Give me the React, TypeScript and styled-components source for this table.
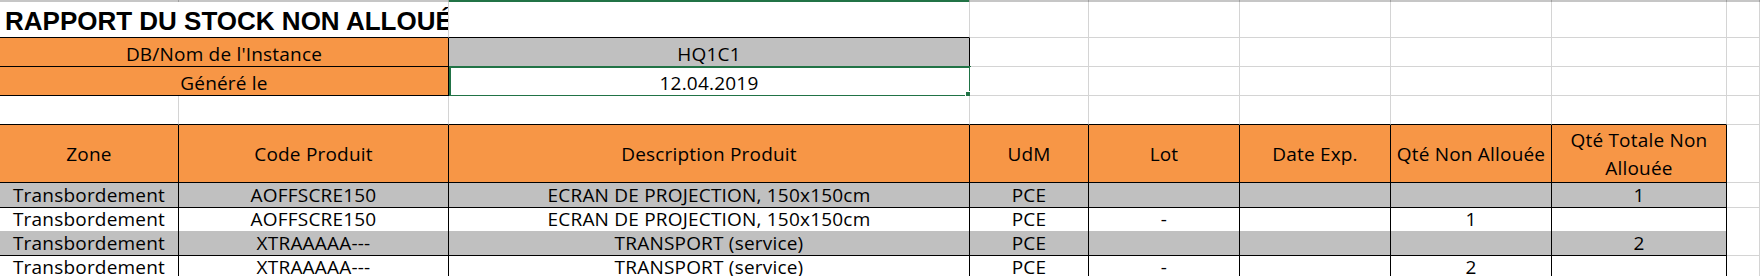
import styled, { createGlobalStyle } from 'styled-components';

const ORANGE = '#f79646';
const GREY = '#c0c0c0';
const GRID = '#d4d4d4';
const INK = '#000000';
const EXCEL_GREEN = '#217346';

const COLUMNS = '179px 270px 521px 119px 151px 151px 161px 175px 1fr';

type Fill = 'orange' | 'grey' | 'white';
type Edge = 'grid' | 'black' | 'none';

const fills: Record<Fill, string> = { orange: ORANGE, grey: GREY, white: '#ffffff' };
const edges: Record<Edge, string> = { grid: GRID, black: INK, none: 'transparent' };

const headers = [
  'Zone',
  'Code Produit',
  'Description Produit',
  'UdM',
  'Lot',
  'Date Exp.',
  'Qté Non Allouée',
  'Qté Totale Non Allouée',
];

const rows = [
  { fill: 'grey' as Fill, height: 25, cells: ['Transbordement', 'AOFFSCRE150', 'ECRAN DE PROJECTION, 150x150cm', 'PCE', '', '', '', '1'] },
  { fill: 'white' as Fill, height: 23, cells: ['Transbordement', 'AOFFSCRE150', 'ECRAN DE PROJECTION, 150x150cm', 'PCE', '-', '', '1', ''] },
  { fill: 'grey' as Fill, height: 25, cells: ['Transbordement', 'XTRAAAAA---', 'TRANSPORT (service)', 'PCE', '', '', '', '2'] },
  { fill: 'white' as Fill, height: 24, cells: ['Transbordement', 'XTRAAAAA---', 'TRANSPORT (service)', 'PCE', '-', '', '2', ''] },
];

const GlobalStyle = createGlobalStyle`
  html, body {
    margin: 0;
    padding: 0;
    background: #ffffff;
    overflow: hidden;
  }
  body {
    font-family: "Open Sans", Lato, sans-serif;
    color: ${INK};
  }
`;

function App() {
  return (
    <Sheet>
      <GlobalStyle />
      <ColumnStrip>
        {Array.from({ length: 9 }).map((_, i) => (
          <StripSegment key={i} $active={i === 2} />
        ))}
      </ColumnStrip>

      <Row $height={36}>
        <TitleCell $span={2} $right="grid" $bottom="black">
          RAPPORT DU STOCK NON ALLOUÉ
        </TitleCell>
        <Cell $right="grid" $bottom="black" />
        {Array.from({ length: 6 }).map((_, i) => (
          <Cell key={i} $right="grid" $bottom="grid" />
        ))}
      </Row>

      <Row $height={29}>
        <Cell $span={2} $fill="orange" $right="black" $bottom="black" $align="bottom">
          DB/Nom de l'Instance
        </Cell>
        <Cell $fill="grey" $right="black" $bottom="black" $align="bottom">
          HQ1C1
        </Cell>
        {Array.from({ length: 6 }).map((_, i) => (
          <Cell key={i} $right="grid" $bottom="grid" />
        ))}
      </Row>

      <Row $height={29}>
        <Cell $span={2} $fill="orange" $right="black" $bottom="black" $align="bottom">
          Généré le
        </Cell>
        <Cell $right="black" $bottom="black" $align="bottom">
          12.04.2019
          <Selection>
            <FillHandle />
          </Selection>
        </Cell>
        {Array.from({ length: 6 }).map((_, i) => (
          <Cell key={i} $right="grid" $bottom="grid" />
        ))}
      </Row>

      <Row $height={29}>
        {Array.from({ length: 8 }).map((_, i) => (
          <Cell key={i} $right="grid" $bottom="black" />
        ))}
        <Cell $right="grid" $bottom="grid" />
      </Row>

      <Row $height={58}>
        {headers.map((label, i) => (
          <HeaderCell key={label} $fill="orange" $right="black" $bottom="black" $wrap={i === 7}>
            {label}
          </HeaderCell>
        ))}
        <Cell $right="grid" $bottom="grid" />
      </Row>

      {rows.map((row, r) => (
        <Row key={r} $height={row.height}>
          {row.cells.map((text, i) => (
            <Cell key={i} $fill={row.fill} $right="black" $bottom="black" $align="bottom">
              {text}
            </Cell>
          ))}
          <Cell $right="grid" $bottom="grid" />
        </Row>
      ))}
    </Sheet>
  );
}

var Sheet = styled.div`
  display: flex;
  flex-direction: column;
  width: 1760px;
  height: 276px;
  overflow: hidden;
`;

var ColumnStrip = styled.div`
  display: grid;
  grid-template-columns: ${COLUMNS};
  height: 2px;
  flex: none;
`;

var StripSegment = styled.div<{ $active?: boolean }>`
  background: ${(p) => (p.$active ? EXCEL_GREEN : '#c6c6c6')};
  border-right: 1px solid #a0a0a0;
  box-sizing: border-box;
`;

var Row = styled.div<{ $height: number }>`
  display: grid;
  grid-template-columns: ${COLUMNS};
  height: ${(p) => p.$height}px;
  flex: none;
`;

var Cell = styled.div<{
  $span?: number;
  $fill?: Fill;
  $right?: Edge;
  $bottom?: Edge;
  $align?: 'center' | 'bottom';
}>`
  position: relative;
  box-sizing: border-box;
  grid-column: span ${(p) => p.$span ?? 1};
  display: flex;
  justify-content: center;
  align-items: ${(p) => (p.$align === 'bottom' ? 'flex-end' : 'center')};
  padding-bottom: ${(p) => (p.$align === 'bottom' ? '1px' : '0')};
  background: ${(p) => fills[p.$fill ?? 'white']};
  border-right: 1px solid ${(p) => edges[p.$right ?? 'grid']};
  border-bottom: 1px solid ${(p) => edges[p.$bottom ?? 'grid']};
  font-size: 19px;
  line-height: 22px;
  letter-spacing: 0.2px;
  white-space: nowrap;
`;

var HeaderCell = styled(Cell)<{ $wrap?: boolean }>`
  text-align: center;
  white-space: ${(p) => (p.$wrap ? 'normal' : 'nowrap')};
  line-height: ${(p) => (p.$wrap ? '28px' : '22px')};
  padding: 0 4px;
`;

var TitleCell = styled(Cell)`
  justify-content: flex-start;
  align-items: center;
  padding: 2px 0 0 5px;
  overflow: hidden;
  font-family: 'Liberation Sans', Arial, sans-serif;
  font-weight: 700;
  font-size: 26px;
  line-height: 30px;
  letter-spacing: 0;
`;

var Selection = styled.div`
  position: absolute;
  top: -1px;
  left: 0;
  right: -2px;
  bottom: -2px;
  border: 2px solid ${EXCEL_GREEN};
  pointer-events: none;
`;

var FillHandle = styled.div`
  position: absolute;
  right: -5px;
  bottom: -5px;
  width: 7px;
  height: 7px;
  background: ${EXCEL_GREEN};
  border: 1px solid #ffffff;
`;

export default App;
